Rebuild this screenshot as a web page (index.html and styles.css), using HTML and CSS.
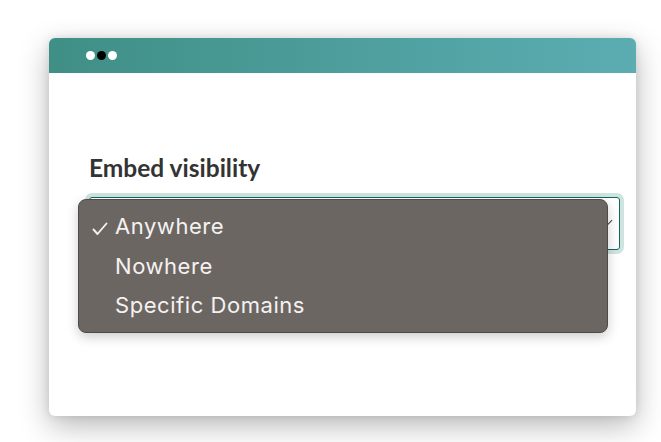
FILE: index.html
```html
<!DOCTYPE html>
<html lang="en">

<head>
    <meta charset="UTF-8">
    <meta name="viewport" content="width=device-width, initial-scale=1.0">
    <title>Embed visibility</title>
    <link rel="stylesheet" href="styles.css">
</head>

<body>
    <div class="window">
        <div class="window-bar">
            <span class="dot"></span>
            <span class="dot dot-dark"></span>
            <span class="dot"></span>
        </div>

        <div class="window-body">
            <label class="field-label">Embed visibility</label>

            <div class="select-wrap">
                <div class="select-box">
                    <span class="select-arrow"></span>
                </div>

                <ul class="dropdown">
                    <li class="option selected">
                        <svg class="check" width="16" height="14" viewBox="0 0 16 14">
                            <polyline points="1.5,7.5 5.5,12 14.5,1.5" fill="none" stroke="#f4f2f1" stroke-width="1.9" stroke-linecap="round" stroke-linejoin="round" />
                        </svg>Anywhere
                    </li>
                    <li class="option">Nowhere</li>
                    <li class="option">Specific Domains</li>
                </ul>
            </div>
        </div>
    </div>
</body>

</html>
```

FILE: styles.css
```css
body {
    margin: 0;
    padding: 38px 25px 26px 49px;
    background-color: #fff;
    font-family: Lato, "Open Sans", sans-serif;
}

.window {
    width: 587px;
    height: 378px;
    background-color: #fff;
    border-radius: 6px;
    box-shadow: 0 10px 30px rgba(0, 0, 0, 0.28), 0 0 8px rgba(0, 0, 0, 0.1);
}

.window-bar {
    height: 35px;
    display: flex;
    align-items: center;
    gap: 2px;
    padding-left: 37px;
    background: linear-gradient(to right, #3f8f86, #5badb2);
    border-radius: 6px 6px 0 0;
}

.dot {
    width: 9px;
    height: 9px;
    border-radius: 50%;
    background-color: #fff;
}

.dot-dark {
    background-color: #000;
}

.window-body {
    padding: 81px 16px 0 40px;
}

.field-label {
    display: block;
    color: #333;
    font-size: 24.5px;
    font-weight: bold;
    line-height: 28px;
    margin-bottom: 15px;
}

.select-wrap {
    position: relative;
}

.select-box {
    position: relative;
    height: 51px;
    border: 1.5px solid #0d6b5f;
    border-radius: 3px;
    box-shadow: 0 0 0 4px #cfe3df;
}

.select-arrow {
    position: absolute;
    right: 8px;
    top: 19px;
    width: 6px;
    height: 6px;
    border-right: 1.5px solid #444;
    border-bottom: 1.5px solid #444;
    transform: rotate(45deg);
}

.dropdown {
    position: absolute;
    left: -11px;
    top: 2px;
    box-sizing: border-box;
    width: 530px;
    height: 134px;
    margin: 0;
    padding: 11px 0 0 0;
    list-style: none;
    background-color: #6c6663;
    border: 1px solid #4f4a48;
    border-radius: 8px;
    box-shadow: 0 4px 12px rgba(0, 0, 0, 0.2);
    font-family: Inter, "Open Sans", sans-serif;
    font-size: 22px;
    letter-spacing: 0.55px;
    color: #f4f2f1;
}

.option {
    position: relative;
    height: 39.5px;
    line-height: 30px;
    padding-left: 36px;
}

.check {
    position: absolute;
    left: 13px;
    top: 11px;
}
```
